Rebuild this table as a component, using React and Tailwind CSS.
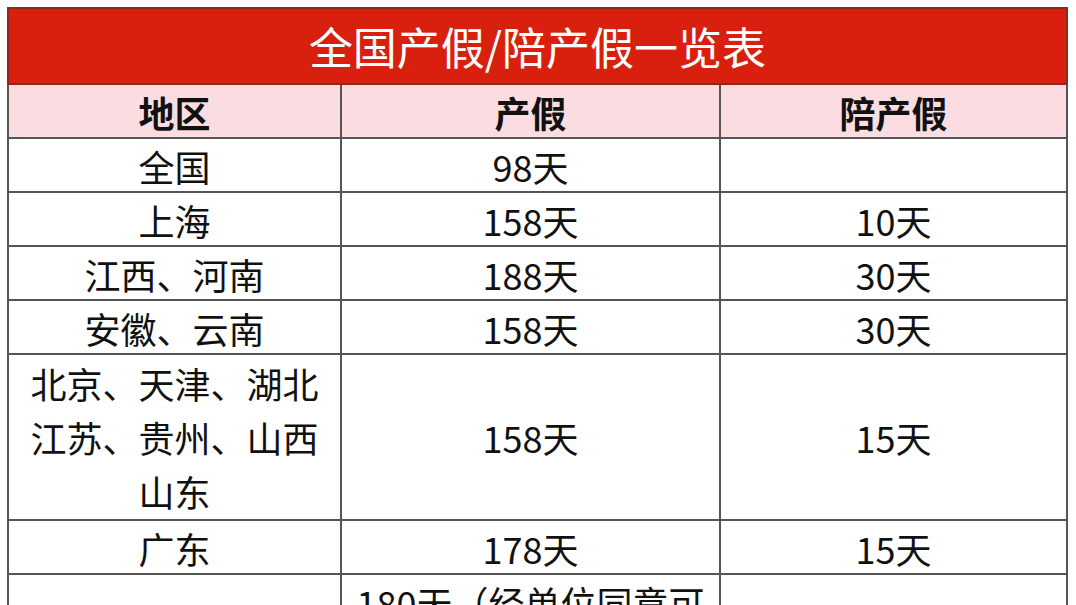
import React from "react";

const rows = [
  { a: ["全国"], b: ["98天"], c: [""], h: "h-[54px]" },
  { a: ["上海"], b: ["158天"], c: ["10天"], h: "h-[54px]" },
  { a: ["江西、河南"], b: ["188天"], c: ["30天"], h: "h-[54px]" },
  { a: ["安徽、云南"], b: ["158天"], c: ["30天"], h: "h-[54px]" },
  { a: ["北京、天津、湖北", "江苏、贵州、山西", "山东"], b: ["158天"], c: ["15天"], h: "h-[166px]" },
  { a: ["广东"], b: ["178天"], c: ["15天"], h: "h-[54px]" },
  { a: ["福建"], b: ["180天（经单位同意可", "延长至180天）"], c: ["15天"], h: "h-[110px]" },
];

function Cell({ lines, last }) {
  return (
    <div
      className={`flex flex-col items-center justify-center text-center leading-[54px] ${last ? "" : "border-r-2 border-[#555555]"}`}
    >
      {lines.map((l, i) => (
        <div key={i} className="whitespace-nowrap">{l}</div>
      ))}
    </div>
  );
}

export default function App() {
  return (
    <div
      className="w-[1076px] h-[605px] overflow-hidden bg-white pt-[7px] pl-[7px]"
      style={{ fontFamily: '"Noto Sans CJK SC", "Noto Sans", sans-serif' }}
    >
      <div className="w-[1061px]">
        <div className="h-[78px] bg-[#d9200f] border-2 border-[#8c2a22] flex items-center justify-center text-white text-[44px] font-normal">
          全国产假/陪产假一览表
        </div>
        <div className="h-[54px] grid grid-cols-[333px_379px_1fr] bg-[#fbdde1] border-x-2 border-b-2 border-[#555555] text-[36px] font-bold text-[#111111]">
          <Cell lines={["地区"]} />
          <Cell lines={["产假"]} />
          <Cell lines={["陪产假"]} last />
        </div>
        {rows.map((r, i) => (
          <div
            key={i}
            className={`${r.h} grid grid-cols-[333px_379px_1fr] border-x-2 border-b-2 border-[#555555] text-[36px] text-[#111111]`}
          >
            <Cell lines={r.a} />
            <Cell lines={r.b} />
            <Cell lines={r.c} last />
          </div>
        ))}
      </div>
    </div>
  );
}
